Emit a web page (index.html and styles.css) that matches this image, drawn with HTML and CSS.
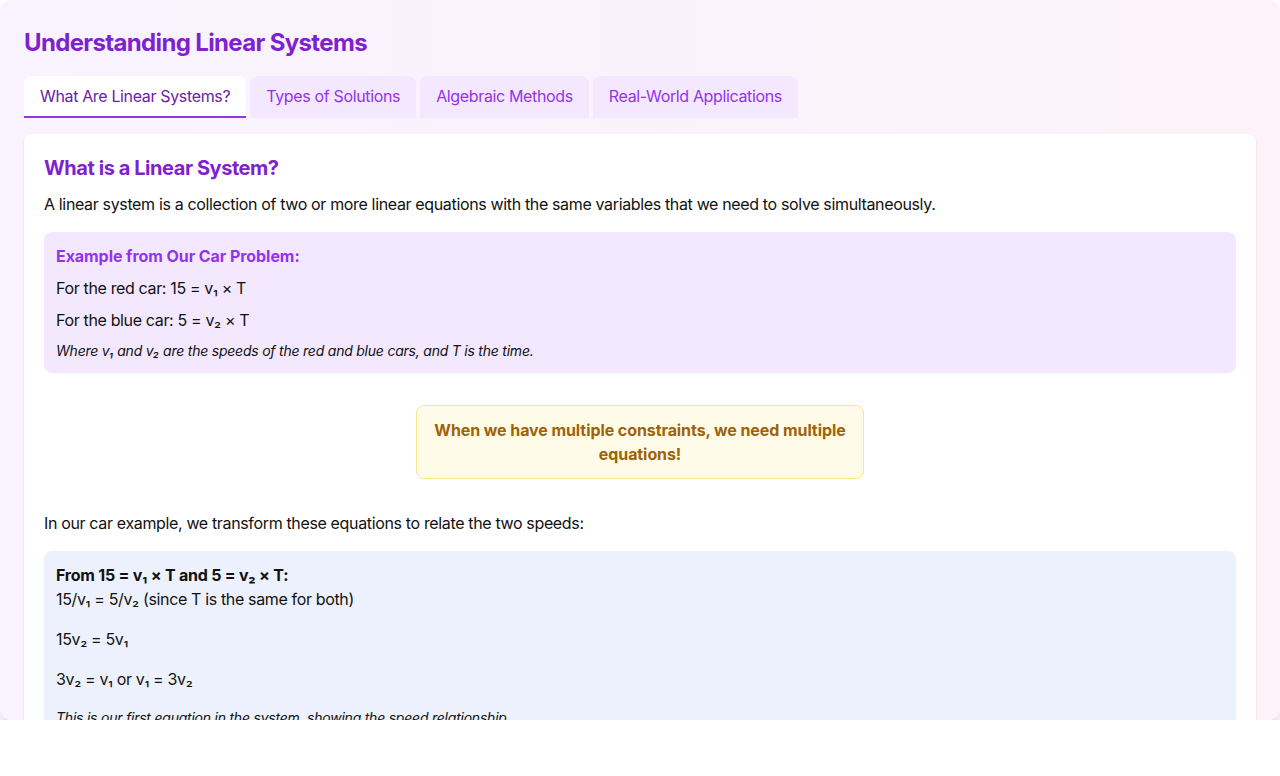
FILE: index.html
```html
<!DOCTYPE html>
<html lang="en">
<head>
<meta charset="utf-8">
<title>Understanding Linear Systems</title>
<link rel="stylesheet" href="styles.css">
</head>
<body>
<div class="shell">
  <h1 class="title">Understanding Linear Systems</h1>
  <nav class="tabs">
    <button class="tab active">What Are Linear Systems?</button>
    <button class="tab">Types of Solutions</button>
    <button class="tab">Algebraic Methods</button>
    <button class="tab">Real-World Applications</button>
  </nav>
  <section class="panel">
    <h2 class="panel-title">What is a Linear System?</h2>
    <p class="text">A linear system is a collection of two or more linear equations with the same variables that we need to solve simultaneously.</p>

    <div class="example">
      <h3 class="example-title">Example from Our Car Problem:</h3>
      <p class="eq">For the red car: 15 = v₁ × T</p>
      <p class="eq">For the blue car: 5 = v₂ × T</p>
      <p class="note">Where v₁ and v₂ are the speeds of the red and blue cars, and T is the time.</p>
    </div>

    <div class="callout">When we have multiple constraints, we need multiple equations!</div>

    <p class="text">In our car example, we transform these equations to relate the two speeds:</p>

    <div class="derive">
      <p class="step"><strong class="lead">From 15 = v₁ × T and 5 = v₂ × T:</strong><br>15/v₁ = 5/v₂ (since T is the same for both)</p>
      <p class="step">15v₂ = 5v₁</p>
      <p class="step">3v₂ = v₁ or v₁ = 3v₂</p>
      <p class="note">This is our first equation in the system, showing the speed relationship.</p>
    </div>
  </section>
</div>
</body>
</html>
```

FILE: styles.css
```css
* {
  box-sizing: border-box;
}

html,
body {
  margin: 0;
  padding: 0;
  background: #ffffff;
}

body {
  font-family: Inter, "Noto Sans", "Liberation Sans", sans-serif;
  color: #111111;
  font-size: 16px;
  line-height: 24px;
  letter-spacing: -0.022em;
}

.shell {
  height: 720px;
  overflow: hidden;
  padding: 25px 24px 24px;
  border-radius: 12px;
  background: linear-gradient(to right, #f8f3ff, #fdf2f8);
  box-shadow: 0 10px 20px rgba(0, 0, 0, 0.12), 0 4px 8px -4px rgba(0, 0, 0, 0.1);
}

.title {
  margin: 0 0 15px;
  font-size: 24px;
  line-height: 36px;
  font-weight: 700;
  letter-spacing: -0.027em;
  color: #7e22ce;
}

.tabs {
  display: flex;
  gap: 4px;
}

.tab {
  font: inherit;
  letter-spacing: inherit;
  font-size: 16px;
  line-height: 24px;
  padding: 8px 16px;
  border: 0;
  border-bottom: 2px solid transparent;
  border-radius: 8px 8px 0 0;
  background: #f3e8ff;
  color: #9333ea;
  cursor: pointer;
}

.tab.active {
  background: #ffffff;
  color: #6b21a8;
  border-bottom-color: #9333ea;
}

.panel {
  margin-top: 16px;
  padding: 20px;
  background: #ffffff;
  border-radius: 8px;
  box-shadow: 0 1px 3px rgba(0, 0, 0, 0.08), 0 1px 2px rgba(0, 0, 0, 0.04);
}

.panel-title {
  margin: 0 0 10px;
  font-size: 20px;
  line-height: 28px;
  font-weight: 700;
  letter-spacing: -0.022em;
  color: #7e22ce;
}

.text {
  margin: 0 0 16px;
}

.example {
  padding: 12px;
  border-radius: 8px;
  background: #f3e8ff;
}

.example-title {
  margin: 0 0 8px;
  font-size: 16px;
  line-height: 24px;
  font-weight: 700;
  letter-spacing: -0.004em;
  color: #9333ea;
}

.eq {
  margin: 0 0 8px;
}

.note {
  margin: 0;
  padding-top: 1px;
  font-size: 14px;
  line-height: 20px;
  font-style: italic;
  letter-spacing: -0.016em;
}

.callout {
  width: 448px;
  margin: 32px auto;
  padding: 12px;
  border: 1px solid #fde68a;
  border-radius: 8px;
  background: #fefce8;
  color: #a16207;
  font-weight: 700;
  letter-spacing: -0.005em;
  text-align: center;
}

.derive {
  padding: 12px;
  border-radius: 8px;
  background: #edf1fd;
}

.lead {
  letter-spacing: -0.014em;
}

.step {
  margin: 0 0 16px;
}
```
